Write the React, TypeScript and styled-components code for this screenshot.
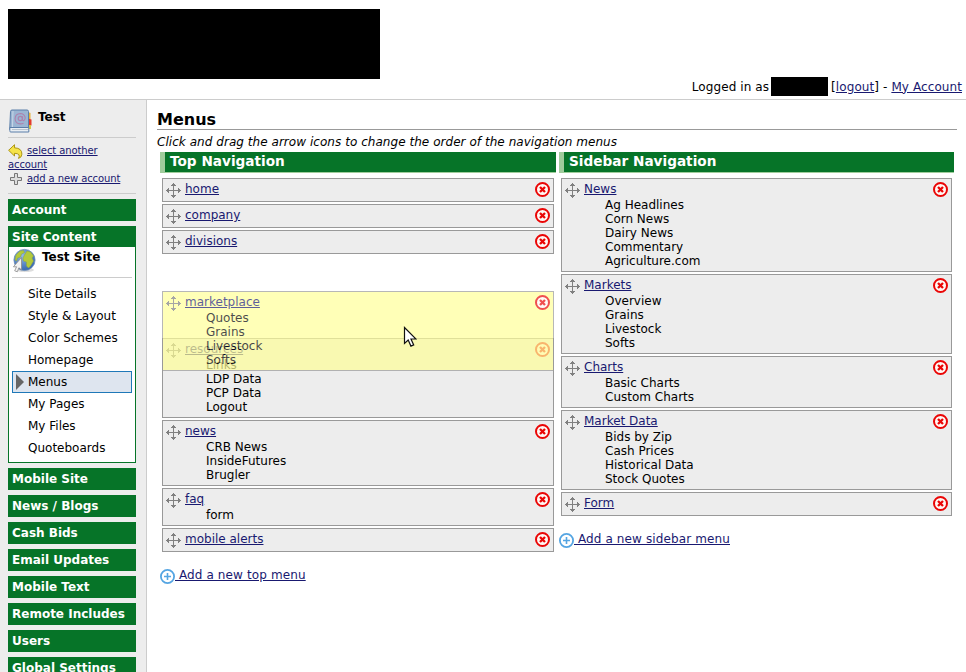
import React from "react";
import styled, { createGlobalStyle, css } from "styled-components";

const GREEN = "#067428";

const GlobalStyle = createGlobalStyle`
  *, *::before, *::after { box-sizing: border-box; }
  body {
    margin: 0;
    background: #fff;
    color: #000;
    font: 12px/14px "DejaVu Sans", sans-serif;
    overflow: hidden;
  }
`;

const Page = styled.div`
  display: flex;
  flex-direction: column;
  height: 100vh;
  overflow: hidden;
`;

const Header = styled.header`
  display: flex;
  justify-content: space-between;
  flex: none;
  height: 100px;
  padding: 9px 4px 0 8px;
  border-bottom: 1px solid #ccc;
`;

const Logo = styled.div`
  width: 372px;
  height: 70px;
  background: #000;
`;

const Login = styled.div`
  display: flex;
  align-items: center;
  align-self: flex-end;
  height: 19px;
  margin-bottom: 3px;
  letter-spacing: 0.09px;
  white-space: pre;
`;

const UserName = styled.span`
  width: 57px;
  height: 19px;
  margin: 0 3px 0 2px;
  background: #000;
`;

const Link = styled.a`
  color: #191970;
  text-decoration: underline;
`;

const Body = styled.div`
  display: flex;
  flex: 1;
  min-height: 0;
`;

const Sidebar = styled.aside`
  display: flex;
  flex-direction: column;
  flex: none;
  gap: 5px;
  width: 147px;
  padding: 0 10px 0 8px;
  border-right: 1px solid #ccc;
  background: #ededed;
  overflow: hidden;
`;

const AccountBox = styled.div`
  flex: none;
  height: 94px;
  border-bottom: 1px solid #ccc;
`;

const AccountTitle = styled.div`
  display: flex;
  gap: 5px;
  height: 38px;
  padding: 9px 0 0 1px;
  border-bottom: 1px solid #ccc;
  font-weight: bold;
`;

const AccountName = styled.span`
  padding-top: 1px;
`;

const AccountLinks = styled.div`
  padding-top: 6px;
  font-size: 10px;
  letter-spacing: -0.1px;
`;

const LinkIcon = styled.span`
  display: inline-block;
  width: 19px;
  height: 14px;
  vertical-align: top;
`;

const LinkSvg = styled.svg`
  display: block;
`;

const AccountLink = styled.div`
  line-height: 14px;
`;

const Section = styled.div`
  flex: none;
  height: 22px;
  padding: 0 4px;
  background: ${GREEN};
  color: #fff;
  font-weight: bold;
  line-height: 22px;
`;

const OpenSection = styled.div`
  flex: none;
  height: 237px;
  border: 1px solid ${GREEN};
  background: #fff;
`;

const OpenTitle = styled.div`
  height: 20px;
  padding: 0 3px;
  background: ${GREEN};
  color: #fff;
  font-weight: bold;
  line-height: 20px;
`;

const SiteTitle = styled.div`
  display: flex;
  gap: 5px;
  height: 31px;
  margin: 0 3px 5px;
  padding: 1px 0 0 1px;
  border-bottom: 1px solid #ccc;
  font-weight: bold;
`;

const SiteName = styled.span`
  padding-top: 2px;
`;

const PageItem = styled.div<{ $active?: boolean }>`
  display: flex;
  align-items: center;
  height: 22px;
  margin: 0 3px;
  padding: 0 3px;
  border: 1px solid transparent;
  ${(p) => p.$active && css`
    border-color: #1f78b8;
    background: #dee5ef;
  `}
`;

const Marker = styled.span`
  display: flex;
  width: 12px;
`;

const Main = styled.main`
  flex: 1;
  padding: 10px 9px 0 10px;
`;

const Title = styled.h1`
  height: 20px;
  margin: 0;
  border-bottom: 1px solid #999;
  font-size: 16px;
  line-height: 19px;
`;

const Hint = styled.p`
  height: 22px;
  margin: 0;
  padding-top: 5px;
  font-style: italic;
  letter-spacing: 0.045px;
`;

const Columns = styled.div`
  display: grid;
  grid-template-columns: 396px 395px;
  gap: 3px;
  padding-left: 3px;
`;

const ColumnTitle = styled.h2`
  height: 21px;
  margin: 0 0 5px;
  padding-left: 5px;
  border-left: 5px solid #a0cc9c;
  border-bottom: 1px solid #a0cc9c;
  background: ${GREEN};
  color: #fff;
  font-size: 13.65px;
  line-height: 19px;
`;

const Cards = styled.div`
  display: flex;
  flex-direction: column;
  gap: 2px;
  padding: 0 2px;
`;

const Slot = styled.div`
  position: relative;
  height: 80px;
`;

const Card = styled.div<{ $dragging?: boolean }>`
  display: grid;
  grid-template-columns: 19px 1fr 15px;
  min-height: 24px;
  padding: 3px;
  border: 1px solid #999;
  background: #ededed;
  ${(p) => p.$dragging && css`
    position: absolute;
    z-index: 1;
    top: 35px;
    left: 0;
    right: 0;
    background: #ff9;
    opacity: 0.7;
  `}
`;

const CardHead = styled.div`
  height: 16px;
`;

const SubItem = styled.div`
  padding-left: 21px;
`;

const HandleBox = styled.div`
  padding-top: 1px;
  line-height: 0;
`;

const AddRow = styled.div`
  display: flex;
  margin-top: 16px;
  letter-spacing: 0.12px;
  white-space: pre;
`;

const AddIcon = styled.svg`
  display: block;
  margin-top: 1px;
`;

const Pointer = styled.svg`
  position: absolute;
  z-index: 2;
  left: 241px;
  top: 70px;
`;

const MoveIcon = () => (
  <HandleBox>
    <svg width="15" height="15" viewBox="0 0 15 15" fill="#808080" shapeRendering="crispEdges">
      <path d="M7 0h1v1h1v1h1v1H8v4h4V5h1v1h1v1h1v1h-1v1h-1v1h-1V8H8v4h2v1H9v1H8v1H7v-1H6v-1H5v-1h2V8H3v2H2V9H1V8H0V7h1V6h1V5h1v2h4V3H5V2h1V1h1z" />
    </svg>
  </HandleBox>
);

const DeleteIcon = () => (
  <svg width="15" height="15" viewBox="0 0 15 15">
    <circle cx="7.5" cy="7.5" r="6.5" fill="#fff8f4" stroke="#ea0606" strokeWidth="2" />
    <path d="M5 5l5 5M10 5l-5 5" stroke="#ea0606" strokeWidth="2.3" />
  </svg>
);

const PlusCircle = () => (
  <AddIcon width="15" height="15" viewBox="0 0 15 15">
    <circle cx="7.5" cy="7.5" r="6.6" fill="#fff" stroke="#55a5e2" strokeWidth="1.8" />
    <path d="M7.5 4v7M4 7.5h7" stroke="#55a5e2" strokeWidth="1.6" />
  </AddIcon>
);

const BookIcon = () => (
  <svg width="24" height="25" viewBox="0 0 24 25">
    <path d="M19 3l2.5 1v6H19z" fill="#e8b13a" />
    <path d="M19 9.5l3.5 1v6H19z" fill="#e33b2c" />
    <path d="M19 16h3v4h-3z" fill="#d8c640" />
    <path d="M3 1h15q1.5 0 1.5 1.5v18H.7L1.5 2.500Q1.600 1 3 1z" fill="#9bb5d3" stroke="#5b7ea9" />
    <path d="M4 2L3.500 18" stroke="#c9d8e8" />
    <path d="M.8 18.500h19v4.500h-18q-1.200 0-1-1.500z" fill="#e9eef3" stroke="#5b7ea9" />
    <path d="M3 20.500h16" stroke="#b9c4cf" />
    <circle cx="11.300" cy="9.500" r="2.100" fill="none" stroke="#ad82ae" strokeWidth="1.200" />
    <path d="M13.500 7.200v3.500q.3 1.300 1.600.7 1.400-1 1-3.200-.8-3.500-4.800-3.700-5 .3-5.200 5.200.3 5 5.200 5.200 2 0 3.300-.8" fill="none" stroke="#ad82ae" strokeWidth="1.100" />
  </svg>
);

const GlobeIcon = () => (
  <svg width="24" height="25" viewBox="0 0 24 25">
    <defs>
      <radialGradient id="sea" cx=".4" cy=".3" r=".7">
        <stop offset="0" stopColor="#8fb7e8" />
        <stop offset="1" stopColor="#3667b0" />
      </radialGradient>
    </defs>
    <ellipse cx="12" cy="22" rx="9" ry="2" fill="#ddd" />
    <circle cx="11.500" cy="12" r="10.600" fill="url(#sea)" stroke="#6f8fb9" strokeWidth=".8" />
    <path d="M3 7l4-4 3.500-.5 1 2-3 1.500-1 3-3 1-1 3-1.500-1zM12 6l2-3 3.500 1 3 4-1.500 2 1.500 3-3 5-2 2-2-2v-4l-3-1-.5-3 1.500-3z" fill="#b3c93b" stroke="#8fa739" strokeWidth=".5" />
    <path d="M8.500 9.500v12.300l-2.600-2-1.600 4-2.600-1 1.800-4H.4z" fill="#f2f2f2" stroke="#8a8a8a" strokeWidth=".8" />
  </svg>
);

const BackIcon = () => (
  <LinkSvg width="15" height="15" viewBox="0 0 15 15">
    <path d="M6.500.7v3.100q7.500.3 7.400 6.400-.2 3.400-3.400 4.200 2.600-5-4-5.100V12L.6 6.300z" fill="#f5e34a" stroke="#a58c08" strokeWidth=".9" />
  </LinkSvg>
);

const PlusIcon = () => (
  <LinkSvg width="15" height="15" viewBox="0 0 15 15">
    <path d="M6.500 1.500h3v4h4v3h-4v4h-3v-4h-4v-3h4z" fill="#ddd" stroke="#777" />
  </LinkSvg>
);

interface Menu {
  name: string;
  items?: string[];
  dragging?: boolean;
}

const MenuCard = ({ name, items = [], dragging }: Menu) => (
  <Card $dragging={dragging}>
    <MoveIcon />
    <div>
      <CardHead><Link>{name}</Link></CardHead>
      <div>
        {items.map((item) => <SubItem key={item}>{item}</SubItem>)}
      </div>
    </div>
    <DeleteIcon />
  </Card>
);

const pages = ["Site Details", "Style & Layout", "Color Schemes", "Homepage", "Menus", "My Pages", "My Files", "Quoteboards"];
const sections = ["Mobile Site", "News / Blogs", "Cash Bids", "Email Updates", "Mobile Text", "Remote Includes", "Users", "Global Settings"];

const topMenus: Menu[] = [
  { name: "home" },
  { name: "company" },
  { name: "divisions" },
  { name: "marketplace", items: ["Quotes", "Grains", "Livestock", "Softs"], dragging: true },
  { name: "resources", items: ["Links", "LDP Data", "PCP Data", "Logout"] },
  { name: "news", items: ["CRB News", "InsideFutures", "Brugler"] },
  { name: "faq", items: ["form"] },
  { name: "mobile alerts" },
];

const sideMenus: Menu[] = [
  { name: "News", items: ["Ag Headlines", "Corn News", "Dairy News", "Commentary", "Agriculture.com"] },
  { name: "Markets", items: ["Overview", "Grains", "Livestock", "Softs"] },
  { name: "Charts", items: ["Basic Charts", "Custom Charts"] },
  { name: "Market Data", items: ["Bids by Zip", "Cash Prices", "Historical Data", "Stock Quotes"] },
  { name: "Form" },
];

export default function App() {
  return (
    <Page>
      <GlobalStyle />
      <Header>
        <Logo />
        <Login>
          <span>Logged in as</span>
          <UserName />
          <span>[<Link>logout</Link>] - <Link>My Account</Link></span>
        </Login>
      </Header>
      <Body>
        <Sidebar>
          <AccountBox>
            <AccountTitle><BookIcon /><AccountName>Test</AccountName></AccountTitle>
            <AccountLinks>
              <AccountLink><LinkIcon><BackIcon /></LinkIcon><Link>select another account</Link></AccountLink>
              <AccountLink><LinkIcon><PlusIcon /></LinkIcon><Link>add a new account</Link></AccountLink>
            </AccountLinks>
          </AccountBox>
          <Section>Account</Section>
          <OpenSection>
            <OpenTitle>Site Content</OpenTitle>
            <SiteTitle><GlobeIcon /><SiteName>Test Site</SiteName></SiteTitle>
            {pages.map((page) => (
              <PageItem key={page} $active={page === "Menus"}>
                <Marker>
                  {page === "Menus" && (
                    <svg width="8" height="16" viewBox="0 0 8 16"><path d="M0 0l8 8-8 8z" fill="#666" /></svg>
                  )}
                </Marker>
                {page}
              </PageItem>
            ))}
          </OpenSection>
          {sections.map((name) => <Section key={name}>{name}</Section>)}
        </Sidebar>
        <Main>
          <Title>Menus</Title>
          <Hint>Click and drag the arrow icons to change the order of the navigation menus</Hint>
          <Columns>
            <section>
              <ColumnTitle>Top Navigation</ColumnTitle>
              <Cards>
                {topMenus.map((menu) =>
                  menu.dragging ? (
                    <Slot key={menu.name}>
                      <MenuCard {...menu} />
                      <Pointer width="14" height="22" viewBox="0 0 14 22">
                        <path d="M1.500 1.500v16l3.700-3.400 2.700 6 2.800-1.200-2.700-5.900h5z" fill="#fff" stroke="#111" strokeWidth="1.200" />
                      </Pointer>
                    </Slot>
                  ) : (
                    <MenuCard key={menu.name} {...menu} />
                  )
                )}
              </Cards>
              <AddRow><PlusCircle /><Link> Add a new top menu</Link></AddRow>
            </section>
            <section>
              <ColumnTitle>Sidebar Navigation</ColumnTitle>
              <Cards>
                {sideMenus.map((menu) => <MenuCard key={menu.name} {...menu} />)}
              </Cards>
              <AddRow><PlusCircle /><Link> Add a new sidebar menu</Link></AddRow>
            </section>
          </Columns>
        </Main>
      </Body>
    </Page>
  );
}
